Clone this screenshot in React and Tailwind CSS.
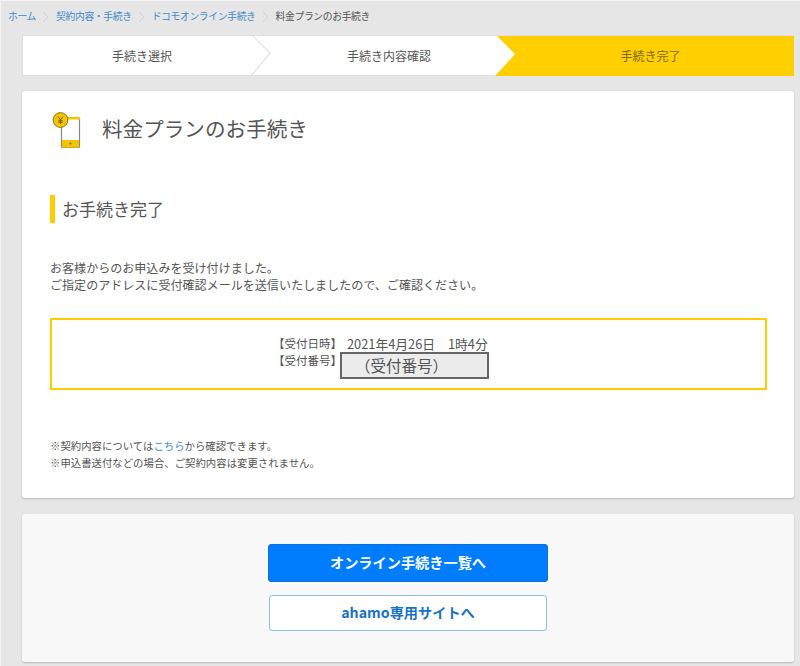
import React from "react";

const crumbs = ["ホーム", "契約内容・手続き", "ドコモオンライン手続き"];

const Sep = () => (
  <svg width="8" height="12" viewBox="0 0 8 12" className="mx-[6px] shrink-0">
    <path d="M1 1l5 5-5 5" fill="none" stroke="#d2d2d2" strokeWidth="1" />
  </svg>
);

const PhoneIcon = () => (
  <svg width="32" height="40" viewBox="0 0 32 40" className="shrink-0">
    <rect x="11.5" y="7.5" width="18" height="30" rx="1" fill="#fff" stroke="#888" strokeWidth="1.2" />
    <rect x="12" y="7" width="18" height="2.5" fill="#f5c400" />
    <rect x="12" y="30" width="17" height="7.5" fill="#f5c400" />
    <circle cx="20.5" cy="33.5" r="1" fill="#7a6a10" />
    <circle cx="10.5" cy="10" r="7.4" fill="#f5c400" stroke="#8a7a20" strokeWidth="1" />
    <path d="M8 6.5l2.5 3.5 2.5-3.5M10.5 10v4M8.3 10.8h4.4M8.3 12.3h4.4" fill="none" stroke="#6b5a10" strokeWidth="0.9" />
  </svg>
);

export default function App() {
  return (
    <div className="w-[800px] h-[666px] overflow-hidden bg-[#e6e6e6] border-t border-l border-[#f4f4f4] text-[#555] font-['Noto_Sans_CJK_JP','Noto_Sans',sans-serif]">
      <nav className="flex items-center h-[34px] pl-[7px] pb-[3px] text-[9.8px] tracking-[-0.35px]">
        {crumbs.map((c) => (
          <React.Fragment key={c}>
            <span className="text-[#3f8ccb]">{c}</span>
            <Sep />
          </React.Fragment>
        ))}
        <span className="text-[#555]">料金プランのお手続き</span>
      </nav>

      <div className="ml-[21px] w-[772px]">
        <div className="relative flex h-[41px] bg-white border border-[#dedede] text-[12px]">
          <div className="w-[238px] flex items-center justify-center">手続き選択</div>
          <div className="w-[256px] flex items-center justify-center">手続き内容確認</div>
          <svg width="22" height="41" viewBox="0 0 22 41" className="absolute left-[228px] top-[-1px]">
            <path d="M1 0l18 18L0 41" fill="none" stroke="#e2e2e2" strokeWidth="1.2" />
          </svg>
          <div className="absolute right-[-1px] top-0 h-[40px] w-[299px] pl-[12px] flex items-center justify-center bg-[#ffcf00] text-[#7d6a10] [clip-path:polygon(2px_0,100%_0,100%_100%,0_100%,20px_18px)]">
            手続き完了
          </div>
        </div>

        <section className="mt-[15px] h-[407px] bg-white rounded-[3px] shadow-[0_1px_2px_rgba(0,0,0,0.2)] pl-[28px]">
          <div className="flex items-center pt-[19px]">
            <PhoneIcon />
            <h1 className="ml-[20px] mb-[4px] text-[20.6px] font-normal leading-none">料金プランのお手続き</h1>
          </div>
          <h2 className="mt-[45px] border-l-[5px] border-[#ffcc00] pl-[7px] h-[28px] flex items-center text-[17px] font-normal">
            お手続き完了
          </h2>
          <p className="mt-[36px] text-[12.05px] leading-[17px]">
            お客様からのお申込みを受け付けました。
            <br />
            ご指定のアドレスに受付確認メールを送信いたしましたので、ご確認ください。
          </p>
          <div className="mt-[25px] w-[717px] h-[72px] border-2 border-[#ffcc00] pl-[221px] pt-[15px] text-[11.5px] leading-[17px]">
            <div className="flex">
              <span className="w-[74px]">【受付日時】</span>
              <span className="text-[12.8px]">2021年4月26日　1時4分</span>
            </div>
            <div className="flex">
              <span className="w-[67px]">【受付番号】</span>
              <div className="w-[149px] h-[27px] bg-[#ececec] border-2 border-[#666] pl-[13px] text-[15.5px] leading-[22px]">
                （受付番号）
              </div>
            </div>
          </div>
          <div className="mt-[47px] text-[10.4px] leading-[17px]">
            <p>
              ※契約内容については<span className="text-[#3f8ccb]">こちら</span>から確認できます。
            </p>
            <p>※申込書送付などの場合、ご契約内容は変更されません。</p>
          </div>
        </section>

        <section className="mt-[16px] h-[148px] bg-[#f8f8f8] rounded-[3px] shadow-[0_1px_2px_rgba(0,0,0,0.2)] flex flex-col items-center pt-[30px]">
          <button className="w-[280px] h-[38px] rounded-[3px] bg-[#007cff] border border-[#0a6fd8] text-white text-[14.2px] font-bold">
            オンライン手続き一覧へ
          </button>
          <button className="mt-[13px] w-[278px] h-[36px] rounded-[3px] bg-white border border-[#8dc0ec] text-[#1a73c0] text-[14.2px] font-bold">
            ahamo専用サイトへ
          </button>
        </section>
      </div>
    </div>
  );
}
